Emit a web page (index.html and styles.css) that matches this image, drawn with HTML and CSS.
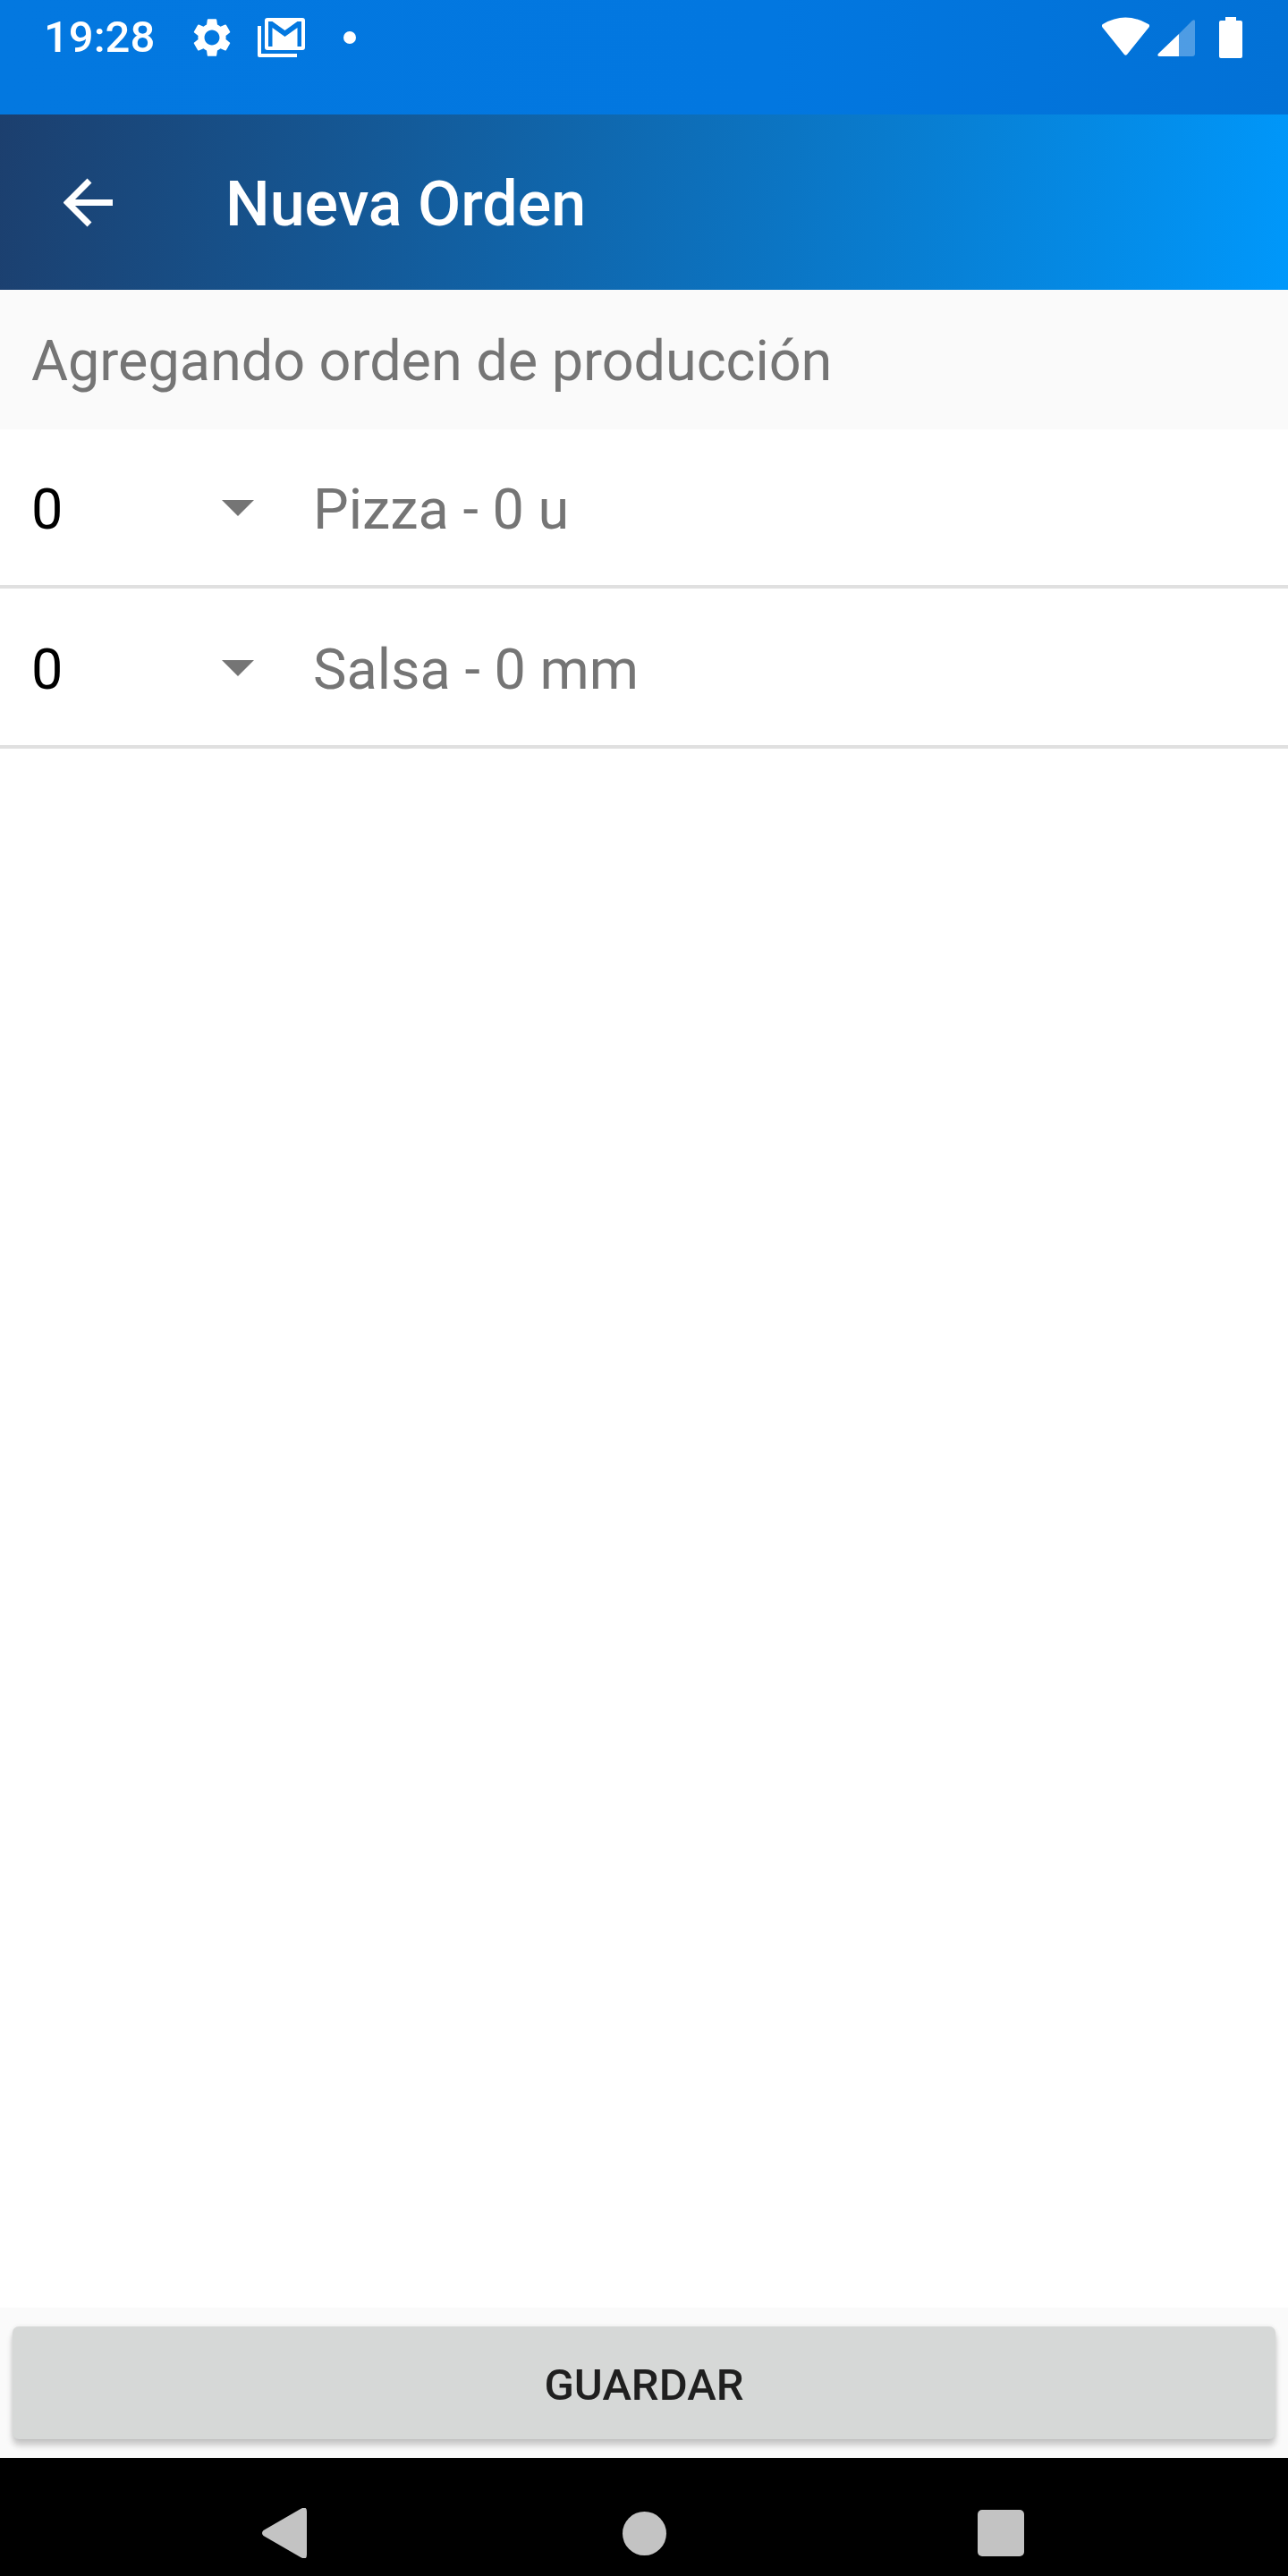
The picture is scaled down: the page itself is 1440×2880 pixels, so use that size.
FILE: index.html
```html
<!DOCTYPE html>
<html lang="es">
<head>
<meta charset="utf-8">
<title>Nueva Orden</title>
<link rel="stylesheet" href="styles.css">
</head>
<body>
<div class="screen">
  <header class="status">
    <div class="status-left">
      <span class="clock">19:28</span>
      <svg class="gear" viewBox="0 0 24 24"><path fill="#fff" d="M19.14 12.94c.04-.3.06-.61.06-.94 0-.32-.02-.64-.07-.94l2.03-1.58a.49.49 0 0 0 .12-.61l-1.92-3.32a.488.488 0 0 0-.59-.22l-2.39.96c-.5-.38-1.03-.7-1.62-.94l-.36-2.54a.484.484 0 0 0-.48-.41h-3.84c-.24 0-.43.17-.47.41l-.36 2.54c-.59.24-1.13.57-1.62.94l-2.39-.96c-.22-.08-.47 0-.59.22L2.74 8.87c-.12.21-.08.47.12.61l2.03 1.58c-.05.3-.09.63-.09.94s.02.64.07.94l-2.03 1.58a.49.49 0 0 0-.12.61l1.92 3.32c.12.22.37.29.59.22l2.39-.96c.5.38 1.03.7 1.62.94l.36 2.54c.05.24.24.41.48.41h3.84c.24 0 .44-.17.47-.41l.36-2.54c.59-.24 1.13-.56 1.62-.94l2.39.96c.22.08.47 0 .59-.22l1.92-3.32c.12-.22.07-.47-.12-.61l-2.01-1.58zM12 15.9c-2.15 0-3.9-1.75-3.9-3.9s1.75-3.9 3.9-3.9 3.9 1.75 3.9 3.9-1.75 3.9-3.9 3.9z"/></svg>
      <svg class="mail" viewBox="0 0 53 44"><path fill="#fff" d="M0 9h4v31h40v4H2q-2 0-2-2z"/><path fill="#fff" fill-rule="evenodd" d="M11 0h39q3 0 3 3v30q0 3-3 3H11q-3 0-3-3V3q0-3 3-3zM12 4h4.500L30.500 14 44.500 4H49v28h-4.500V11L30.500 21 16.500 11v21H12z"/></svg>
      <span class="dot"></span>
    </div>
    <div class="status-right">
      <svg class="wifi" viewBox="0 0 53 43"><path fill="#fff" d="M1 8Q26-7 52 8q2 1 .5 3.5L28 42q-1.500 1.500-3 0L.5 11.500Q-1 9 1 8z"/></svg>
      <svg class="signal" viewBox="0 0 42 41"><path fill="#fff" fill-opacity=".3" d="M24 16 39 1q3-2 3 1v36q0 3-3 3H24z"/><path fill="#fff" d="M24 16v25H3q-4 0-2-3z"/></svg>
      <svg class="battery" viewBox="0 0 26 46"><path fill="#fff" d="M7 0h12v4h5q2 0 2 2v38q0 2-2 2H2q-2 0-2-2V6q0-2 2-2h5z"/></svg>
    </div>
  </header>
  <div class="appbar">
    <svg class="back" viewBox="0 0 55 55"><path fill="none" stroke="#fff" stroke-width="7" d="M55 27.500H5M29 3 4.500 27.500 29 52"/></svg>
    <h1 class="title">Nueva Orden</h1>
  </div>
  <div class="subtitle">Agregando orden de producción</div>
  <main class="list">
    <div class="row">
      <div class="spinner"><span class="value">0</span><span class="caret"></span></div>
      <span class="name">Pizza - 0 u</span>
    </div>
    <div class="row">
      <div class="spinner"><span class="value">0</span><span class="caret"></span></div>
      <span class="name">Salsa - 0 mm</span>
    </div>
  </main>
  <div class="footer"><button class="save" type="button">GUARDAR</button></div>
  <nav class="navbar">
    <svg class="nav-back" viewBox="0 0 50 56"><path fill="#c3c3c3" d="M1.500 25 43 1q7-4 7 3v48q0 7-7 3L1.500 31q-3-3 0-6z"/></svg>
    <span class="nav-home"></span>
    <span class="nav-recent"></span>
  </nav>
</div>
</body>
</html>
```
FILE: styles.css
```css
* { box-sizing: border-box; }
html, body { margin: 0; padding: 0; }
body { font-family: Roboto, "Noto Sans", sans-serif; background: #fff; }
.screen { width: 1440px; height: 2880px; display: flex; flex-direction: column; overflow: hidden; }

.status { height: 128px; flex: none; background: linear-gradient(to right, #0378e0 0%, #0277e0 60%, #0271d6 100%); display: flex; justify-content: space-between; align-items: flex-start; padding: 19px 51px 0 49px; color: #fff; }
.status-left { display: flex; align-items: center; height: 46px; }
.clock { font-size: 49px; font-weight: 500; line-height: 46px; width: 120px; }
.gear { width: 52px; height: 52px; margin-left: 42px; flex: none; }
.mail { width: 53px; height: 44px; margin-left: 25px; flex: none; }
.dot { width: 14px; height: 14px; border-radius: 50%; background: #fff; margin-left: 43px; flex: none; }
.status-right { display: flex; align-items: flex-start; }
.wifi { width: 53px; height: 43px; flex: none; }
.signal { width: 42px; height: 41px; margin: 3px 0 0 9px; flex: none; }
.battery { width: 26px; height: 46px; margin-left: 27px; flex: none; }

.appbar { height: 196px; flex: none; background: linear-gradient(98deg, #1c3f6e 0%, #0098fb 100%); display: flex; align-items: center; padding-left: 71px; color: #fff; }
.back { width: 55px; height: 55px; flex: none; }
.title { margin: 4px 0 0 126px; font-size: 70px; font-weight: 500; line-height: 1; }

.subtitle { height: 156px; flex: none; background: #fafafa; display: flex; align-items: center; padding: 2px 0 0 35px; font-size: 63px; letter-spacing: -.06px; color: #757575; }

.list { flex: 1; background: #fff; }
.row { height: 178px; display: flex; align-items: center; border-bottom: 4px solid #e0e0e0; }
.row + .row { height: 179px; padding-top: 2px; }
.spinner { width: 350px; height: 100%; display: flex; align-items: center; justify-content: space-between; padding: 0 66px 0 35px; flex: none; }
.value { font-size: 63px; color: #000; padding-top: 4px; }
.caret { width: 0; height: 0; margin-top: 1px; border-left: 18px solid transparent; border-right: 18px solid transparent; border-top: 18px solid #757575; }
.name { font-size: 63px; color: #757575; padding-top: 4px; }

.footer { height: 168px; flex: none; background: #fafafa; padding: 21px 14px 21px 14px; }
.save { display: block; width: 100%; height: 126px; border: 0; border-radius: 7px; background: #d6d8d7; color: #1f1f1f; font-family: inherit; font-size: 49px; font-weight: 500; padding: 4px 0 0; box-shadow: 0 7px 7px rgba(0, 0, 0, .2), 0 0 5px rgba(0, 0, 0, .08); }

.navbar { height: 132px; flex: none; background: #000; display: grid; grid-template-columns: repeat(3, auto); justify-content: start; align-items: center; padding: 36px 0 0 293px; }
.nav-back { width: 50px; height: 56px; }
.nav-home { width: 49px; height: 49px; border-radius: 50%; background: #c3c3c3; margin-left: 353px; }
.nav-recent { width: 52px; height: 52px; border-radius: 5px; background: #c3c3c3; margin-left: 348px; }
```
